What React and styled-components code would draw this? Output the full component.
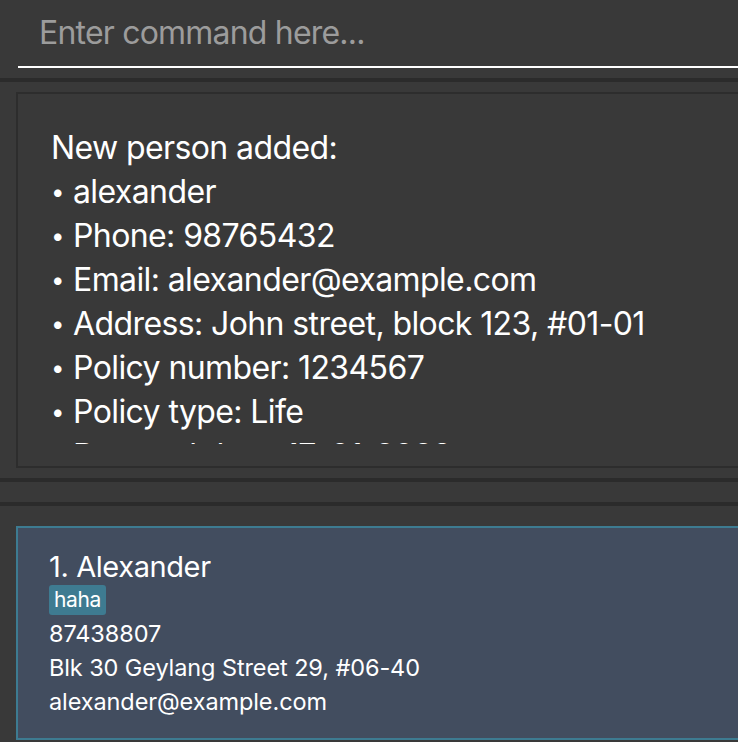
import React from 'react';
import styled, { createGlobalStyle } from 'styled-components';

const GlobalStyle = createGlobalStyle`
    html, body {
        margin: 0;
        padding: 0;
        background: #393939;
        overflow: hidden;
    }
    * {
        box-sizing: border-box;
    }
`;

const resultLines = [
    'alexander',
    'Phone: 98765432',
    'Email: alexander@example.com',
    'Address: John street, block 123, #01-01',
    'Policy number: 1234567',
    'Policy type: Life',
    'Renewal date: 17-01-2028',
];

const persons = [
    {
        id: 1,
        name: 'Alexander',
        tags: ['haha'],
        phone: '87438807',
        address: 'Blk 30 Geylang Street 29, #06-40',
        email: 'alexander@example.com',
    },
];

const App = () => {
    return (
        <Page>
            <GlobalStyle />
            <CommandBox>
                <CommandInput placeholder="Enter command here..." />
            </CommandBox>
            <Divider />
            <ResultPane>
                <ResultBox>
                    <ResultText>
                        <ResultLine>New person added:</ResultLine>
                        {resultLines.map((line) => (
                            <ResultLine key={line}>
                                <Bullet>•</Bullet>{line}
                            </ResultLine>
                        ))}
                    </ResultText>
                </ResultBox>
            </ResultPane>
            <Divider />
            <Spacer />
            <Divider />
            <ListPane>
                {persons.map((p) => (
                    <Card key={p.id}>
                        <Name>{p.id}. {p.name}</Name>
                        <Tags>
                            {p.tags.map((t) => <Tag key={t}>{t}</Tag>)}
                        </Tags>
                        <Field>{p.phone}</Field>
                        <Field>{p.address}</Field>
                        <Field>{p.email}</Field>
                    </Card>
                ))}
            </ListPane>
        </Page>
    );
};

export default App;

const Page = styled.div`
    width: 738px;
    height: 742px;
    display: flex;
    flex-direction: column;
    background: #393939;
    font-family: Inter, "Open Sans", sans-serif;
    overflow: hidden;
`;

const CommandBox = styled.div`
    padding: 0 0 10px 18px;
`;

const CommandInput = styled.input`
    width: 100%;
    height: 68px;
    display: block;
    background: transparent;
    border: none;
    border-bottom: 2px solid #ffffff;
    outline: none;
    padding: 0 0 2px 21px;
    font-family: Inter, "Open Sans", sans-serif;
    font-size: 32px;
    letter-spacing: -0.8px;
    color: #ffffff;

    &::placeholder {
        color: #9c9c9c;
    }
`;

const Divider = styled.div`
    height: 4px;
    flex-shrink: 0;
    background: #2b2b2b;
`;

const ResultPane = styled.div`
    padding: 10px 0 10px 16px;
`;

const ResultBox = styled.div`
    height: 376px;
    border: 2px solid #2d2d2d;
    border-right: none;
    padding: 32px 0 0 33px;
`;

const ResultText = styled.div`
    height: 318px;
    overflow: hidden;
`;

const ResultLine = styled.div`
    height: 44px;
    font-size: 32px;
    line-height: 44px;
    letter-spacing: -0.6px;
    color: #ffffff;
    white-space: nowrap;
`;

const Bullet = styled.span`
    display: inline-block;
    width: 22px;
    font-size: 24px;
    vertical-align: top;
`;

const Spacer = styled.div`
    height: 20px;
`;

const ListPane = styled.div`
    padding: 20px 0 0 16px;
    flex: 1;
`;

const Card = styled.div`
    height: 214px;
    background: #424d5f;
    border: 2px solid #3d7b91;
    border-right: none;
    padding: 22px 0 0 31px;
    color: #ffffff;
`;

const Name = styled.div`
    font-size: 29px;
    line-height: 34px;
    letter-spacing: -0.4px;
`;

const Tags = styled.div`
    display: flex;
    gap: 6px;
    margin: 1px 0 2px;
`;

const Tag = styled.span`
    background: #3e7b91;
    border-radius: 3px;
    padding: 0 5px;
    height: 30px;
    line-height: 30px;
    font-size: 21px;
    letter-spacing: -0.4px;
    color: #ffffff;
`;

const Field = styled.div`
    font-size: 23.5px;
    line-height: 34px;
    letter-spacing: -0.1px;
    color: #ffffff;
`;
